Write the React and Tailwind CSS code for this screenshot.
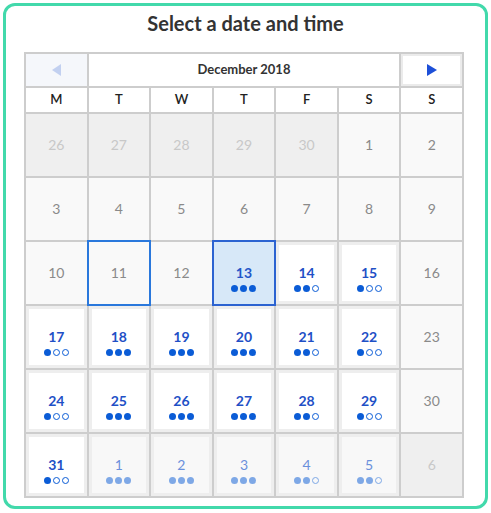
import React from "react";

const F = { fontFamily: "Lato, 'Open Sans', sans-serif" };

const days = [
  // [num, type, dots]
  // type: other, na, avail, next, sel, today
  [26, "other"], [27, "other"], [28, "other"], [29, "other"], [30, "other"], [1, "na"], [2, "na"],
  [3, "na"], [4, "na"], [5, "na"], [6, "na"], [7, "na"], [8, "na"], [9, "na"],
  [10, "na"], [11, "today"], [12, "na"], [13, "sel", 3], [14, "avail", 2], [15, "avail", 1], [16, "na"],
  [17, "avail", 1], [18, "avail", 3], [19, "avail", 3], [20, "avail", 3], [21, "avail", 2], [22, "avail", 1], [23, "na"],
  [24, "avail", 1], [25, "avail", 3], [26, "avail", 3], [27, "avail", 3], [28, "avail", 2], [29, "avail", 1], [30, "na"],
  [31, "avail", 1], [1, "next", 3], [2, "next", 3], [3, "next", 3], [4, "next", 2], [5, "next", 2], [6, "other"],
];

function Dots({ n, light }) {
  return (
    <div className="flex gap-[2px] mt-[4px] h-[7px]">
      {[0, 1, 2].map((i) =>
        i < n ? (
          <span
            key={i}
            className={
              "block w-[7px] h-[7px] rounded-full " +
              (light ? "bg-[#7ea8e6]" : "bg-[#0b5cd6]")
            }
          />
        ) : (
          <span
            key={i}
            className={
              "block w-[7px] h-[7px] rounded-full border-[1.3px] " +
              (light ? "border-[#7ea8e6]" : "border-[#0b5cd6]")
            }
          />
        )
      )}
    </div>
  );
}

function Cell({ d }) {
  const [num, type, dots] = d;
  if (type === "other") {
    return (
      <div className="bg-[#efefef] flex flex-col items-center pt-[23px]">
        <span className="text-[14px] leading-[16px] text-[#c8c8c8]">{num}</span>
      </div>
    );
  }
  if (type === "na") {
    return (
      <div className="bg-[#f9f9f9] flex flex-col items-center pt-[23px]">
        <span className="text-[14px] leading-[16px] text-[#8a8a8a]">{num}</span>
      </div>
    );
  }
  if (type === "today") {
    return (
      <div className="-m-[2px] border-2 border-[#2a78dc] bg-[#f9f9f9] flex flex-col items-center pt-[23px]">
        <span className="text-[14px] leading-[16px] text-[#8a8a8a]">{num}</span>
      </div>
    );
  }
  if (type === "sel") {
    return (
      <div className="-m-[2px] border-2 border-[#2c63d1] bg-[#d7e8f8] flex flex-col items-center pt-[23px]">
        <span className="text-[14px] leading-[16px] font-bold text-[#2256c8]">{num}</span>
        <Dots n={dots} />
      </div>
    );
  }
  const light = type === "next";
  return (
    <div className="bg-[#eeeeee] p-[3px] flex">
      <div
        className={
          "flex-1 flex flex-col items-center pt-[20px] " +
          (light ? "bg-[#f8f8f8]" : "bg-white")
        }
      >
        <span
          className={
            "text-[14px] leading-[16px] " +
            (light ? "text-[#6b90dc]" : "font-bold text-[#1f50c6]")
          }
        >
          {num}
        </span>
        <Dots n={dots} light={light} />
      </div>
    </div>
  );
}

export default function App() {
  return (
    <div style={F} className="p-[3px] bg-white">
      <div className="border-[3px] border-[#42d9ab] rounded-[12px] bg-white pt-[4px] pb-[8px]">
        <h1 className="text-center text-[20px] leading-[26px] font-bold text-[#333333] mb-[16px]">
          Select a date and time
        </h1>
        <div className="ml-[18px] w-[440px] grid grid-cols-7 gap-[2px] p-[2px] bg-[#cdcdcd] grid-rows-[32px_24px_repeat(6,62px)]">
          <div className="bg-[#f5f7fb] flex items-center justify-center">
            <svg width="9" height="12" viewBox="0 0 9 12">
              <polygon points="9,0 9,12 0,6" fill="#c2d0f0" />
            </svg>
          </div>
          <div className="col-span-5 bg-white flex items-center justify-center text-[13px] font-bold text-[#333]">
            December 2018
          </div>
          <div className="bg-[#ebebeb] p-[2px] flex">
            <div className="flex-1 bg-white flex items-center justify-center">
              <svg width="10" height="12" viewBox="0 0 10 12">
                <polygon points="0,0 10,6 0,12" fill="#1d4fd8" />
              </svg>
            </div>
          </div>
          {["M", "T", "W", "T", "F", "S", "S"].map((w, i) => (
            <div
              key={i}
              className="bg-white flex items-center justify-center text-[13px] font-semibold text-[#222]"
            >
              {w}
            </div>
          ))}
          {days.map((d, i) => (
            <Cell key={i} d={d} />
          ))}
        </div>
      </div>
    </div>
  );
}
